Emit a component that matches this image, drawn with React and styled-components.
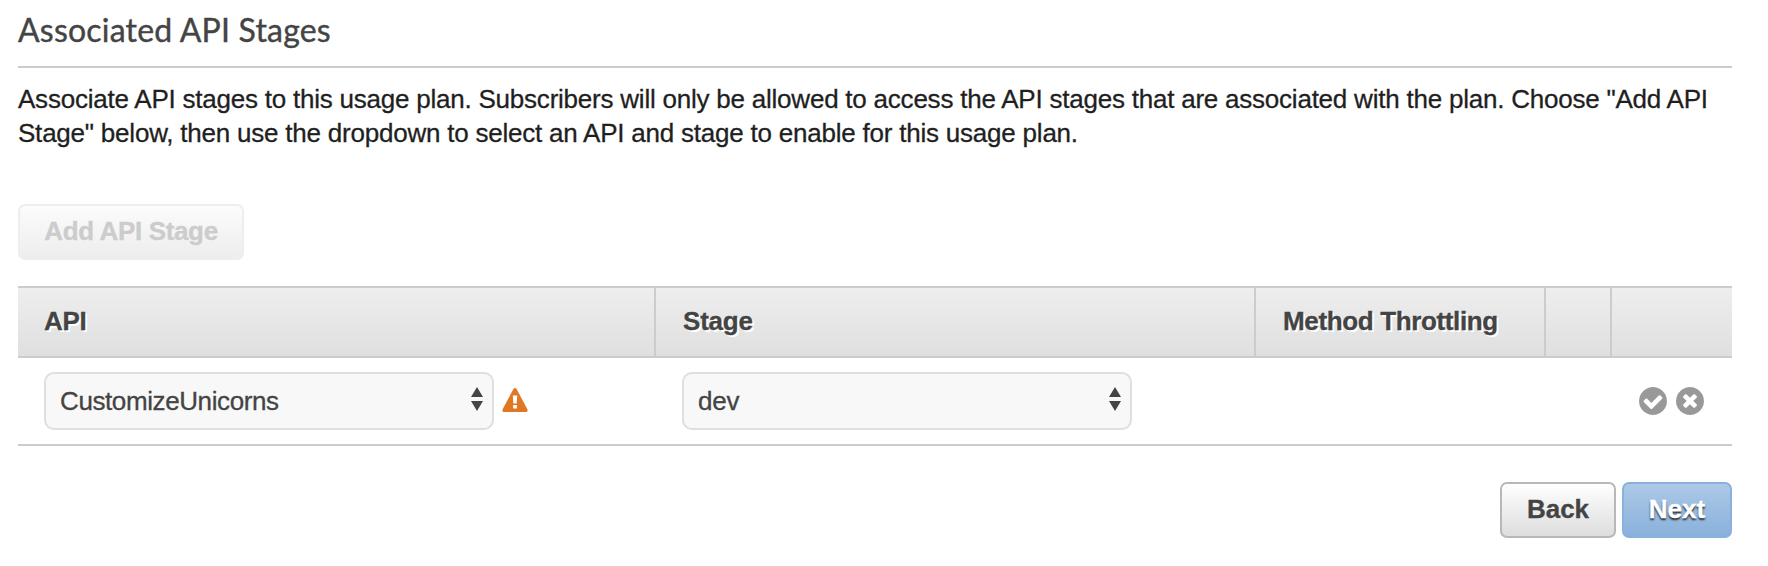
import React from "react";
import styled, { createGlobalStyle } from "styled-components";

const GlobalStyle = createGlobalStyle`
  *, *::before, *::after { box-sizing: border-box; }
  body {
    margin: 0;
    background: #fff;
    color: #1f1f1f;
    font-family: "Liberation Sans", Arial, sans-serif;
    font-size: 26px;
  }
`;

const Page = styled.main`
  width: 1768px;
  height: 566px;
  padding: 0 36px 0 18px;
  overflow: hidden;
`;

const Title = styled.h1`
  margin: 0;
  height: 68px;
  padding-top: 10px;
  border-bottom: 2px solid #ccc;
  color: #444;
  font: 400 32px/40px Lato, sans-serif;
  letter-spacing: 0.2px;
  -webkit-text-stroke: 0.4px;
`;

const Intro = styled.p`
  margin: 14px 0 51px;
  height: 71px;
  line-height: 34px;
  white-space: nowrap;
  -webkit-text-stroke: 0.3px;
`;

const Line = styled.span`
  display: block;
  letter-spacing: ${(p) => p.$spacing || "0"};
`;

const variants = {
  disabled: `
    border-color: #eee;
    background: linear-gradient(#fcfcfc, #ededed);
    color: #ccc;
  `,
  plain: `
    border-color: #b8b8b8;
    background: linear-gradient(#fff, #ddd);
    color: #444;
  `,
  primary: `
    border-color: #88b1dc;
    background: linear-gradient(#adc9e7, #89b1dc);
    color: #fff;
    text-shadow: 0 2px 2px #222;
  `,
};

const Button = styled.button`
  display: block;
  width: ${(p) => p.$width}px;
  height: 56px;
  padding: 0 0 2px;
  border: 2px solid;
  border-radius: 7px;
  font: 700 26px/30px "Liberation Sans", Arial, sans-serif;
  letter-spacing: ${(p) => p.$spacing || "0"};
  white-space: nowrap;
  -webkit-text-stroke: 0.3px;
  ${(p) => variants[p.$variant]}
`;

const Table = styled.div`
  margin-top: 26px;
`;

const Row = styled.div`
  display: grid;
  grid-template-columns: 638px 600px 290px 66px 120px;
  border-bottom: 2px solid #ccc;
`;

const HeaderRow = styled(Row)`
  height: 72px;
  border-top: 2px solid #ccc;
  background: linear-gradient(#eee, #dfdfdf);
`;

const HeaderCell = styled.div`
  padding: 18px 0 0 ${(p) => (p.$first ? 26 : 27)}px;
  border-right: ${(p) => (p.$last ? "0" : "2px solid #ccc")};
  color: #444;
  font-weight: 700;
  line-height: 30px;
  letter-spacing: ${(p) => p.$spacing || "0"};
  text-shadow: 2px 2px 0 #fff;
  white-space: nowrap;
  -webkit-text-stroke: 0.3px;
`;

const BodyRow = styled(Row)`
  height: 88px;
`;

const Cell = styled.div`
  display: flex;
  align-items: flex-start;
  padding: 14px 0 0 26px;
`;

const ActionCell = styled(Cell)`
  padding: 28.5px 28px 0 0;
  justify-content: flex-end;
  gap: 9px;
`;

const SelectBox = styled.div`
  position: relative;
  width: 450px;
  height: 58px;
`;

const Select = styled.select`
  appearance: none;
  display: block;
  width: 100%;
  height: 100%;
  padding: 0 40px 0 14px;
  border: 2px solid #dfdfdf;
  border-radius: 10px;
  background: #f8f8f8;
  color: #444;
  font: 400 26px/30px "Liberation Sans", Arial, sans-serif;
  letter-spacing: ${(p) => p.$spacing || "0"};
  -webkit-text-stroke: 0.3px;
`;

const Arrows = styled.svg`
  position: absolute;
  top: 15px;
  right: 11px;
  pointer-events: none;
`;

const Warning = styled.svg`
  margin: 16px 0 0 7.5px;
`;

const Footer = styled.footer`
  display: flex;
  justify-content: flex-end;
  gap: 6px;
  margin-top: 36px;
`;

const DISC =
  "M1664 896q0 209-103 385.5t-279.5 279.5-385.5 103-385.5-103-279.5-279.5-103-385.5 103-385.5 279.5-279.5 385.5-103 385.5 103 279.5 279.5 103 385.5z";
const CHECK =
  "M1412 734q0-28-18-46l-91-90q-19-19-45-19t-45 19l-408 407-226-226q-19-19-45-19t-45 19l-91 90q-18 18-18 46 0 27 18 45l362 362q19 19 45 19 27 0 46-19l543-543q18-18 18-45z";
const CROSS =
  "M1277 1122q0-26-19-45l-181-181 181-181q19-19 19-45 0-27-19-46l-90-90q-19-19-46-19-26 0-45 19l-181 181-181-181q-19-19-45-19-27 0-46 19l-90 90q-19 19-19 46 0 26 19 45l181 181-181 181q-19 19-19 45 0 27 19 46l90 90q19 19 46 19 26 0 45-19l181-181 181 181q19 19 45 19 27 0 46-19l90-90q19-19 19-46z";

const DiscIcon = ({ mark, label }) => (
  <svg width="28" height="28" viewBox="128 128 1536 1536" role="img" aria-label={label}>
    <path d={DISC} fill="#999" />
    <path d={mark} fill="#fff" />
  </svg>
);

const Dropdown = ({ value, spacing }) => (
  <SelectBox>
    <Select defaultValue={value} $spacing={spacing}>
      <option>{value}</option>
    </Select>
    <Arrows width="12" height="24" viewBox="0 0 12 24">
      <path d="M6 0 12 10H0Z M0 14H12L6 24Z" fill="#444" />
    </Arrows>
  </SelectBox>
);

export default function App() {
  return (
    <>
      <GlobalStyle />
      <Page>
        <Title>Associated API Stages</Title>
        <Intro>
          <Line $spacing="-0.225px">
            Associate API stages to this usage plan. Subscribers will only be allowed to access the API stages that are
            associated with the plan. Choose "Add API
          </Line>
          <Line $spacing="-0.22px">
            Stage" below, then use the dropdown to select an API and stage to enable for this usage plan.
          </Line>
        </Intro>
        <Button $variant="disabled" $width={226} $spacing="-0.36px" disabled>
          Add API Stage
        </Button>
        <Table>
          <HeaderRow>
            <HeaderCell $first $spacing="-0.3px">API</HeaderCell>
            <HeaderCell $spacing="-0.2px">Stage</HeaderCell>
            <HeaderCell $spacing="-0.36px">Method Throttling</HeaderCell>
            <HeaderCell />
            <HeaderCell $last />
          </HeaderRow>
          <BodyRow>
            <Cell>
              <Dropdown value="CustomizeUnicorns" spacing="-0.4px" />
              <Warning width="26" height="24" viewBox="0 0 26 24">
                <path
                  d="M11.3 1.2Q13-1 14.7 1.2L25.4 21.3Q26.2 24 23.8 24H2.2Q-.2 24 .6 21.3Z"
                  fill="#e07722"
                />
                <path d="M10.8 7.5h4.4l-.5 8h-3.4zM11.1 17h3.8v3.5h-3.8z" fill="#fff" />
              </Warning>
            </Cell>
            <Cell>
              <Dropdown value="dev" spacing="-0.2px" />
            </Cell>
            <Cell />
            <Cell />
            <ActionCell>
              <DiscIcon mark={CHECK} label="Save" />
              <DiscIcon mark={CROSS} label="Remove" />
            </ActionCell>
          </BodyRow>
        </Table>
        <Footer>
          <Button $variant="plain" $width={116}>
            Back
          </Button>
          <Button $variant="primary" $width={110}>
            Next
          </Button>
        </Footer>
      </Page>
    </>
  );
}
